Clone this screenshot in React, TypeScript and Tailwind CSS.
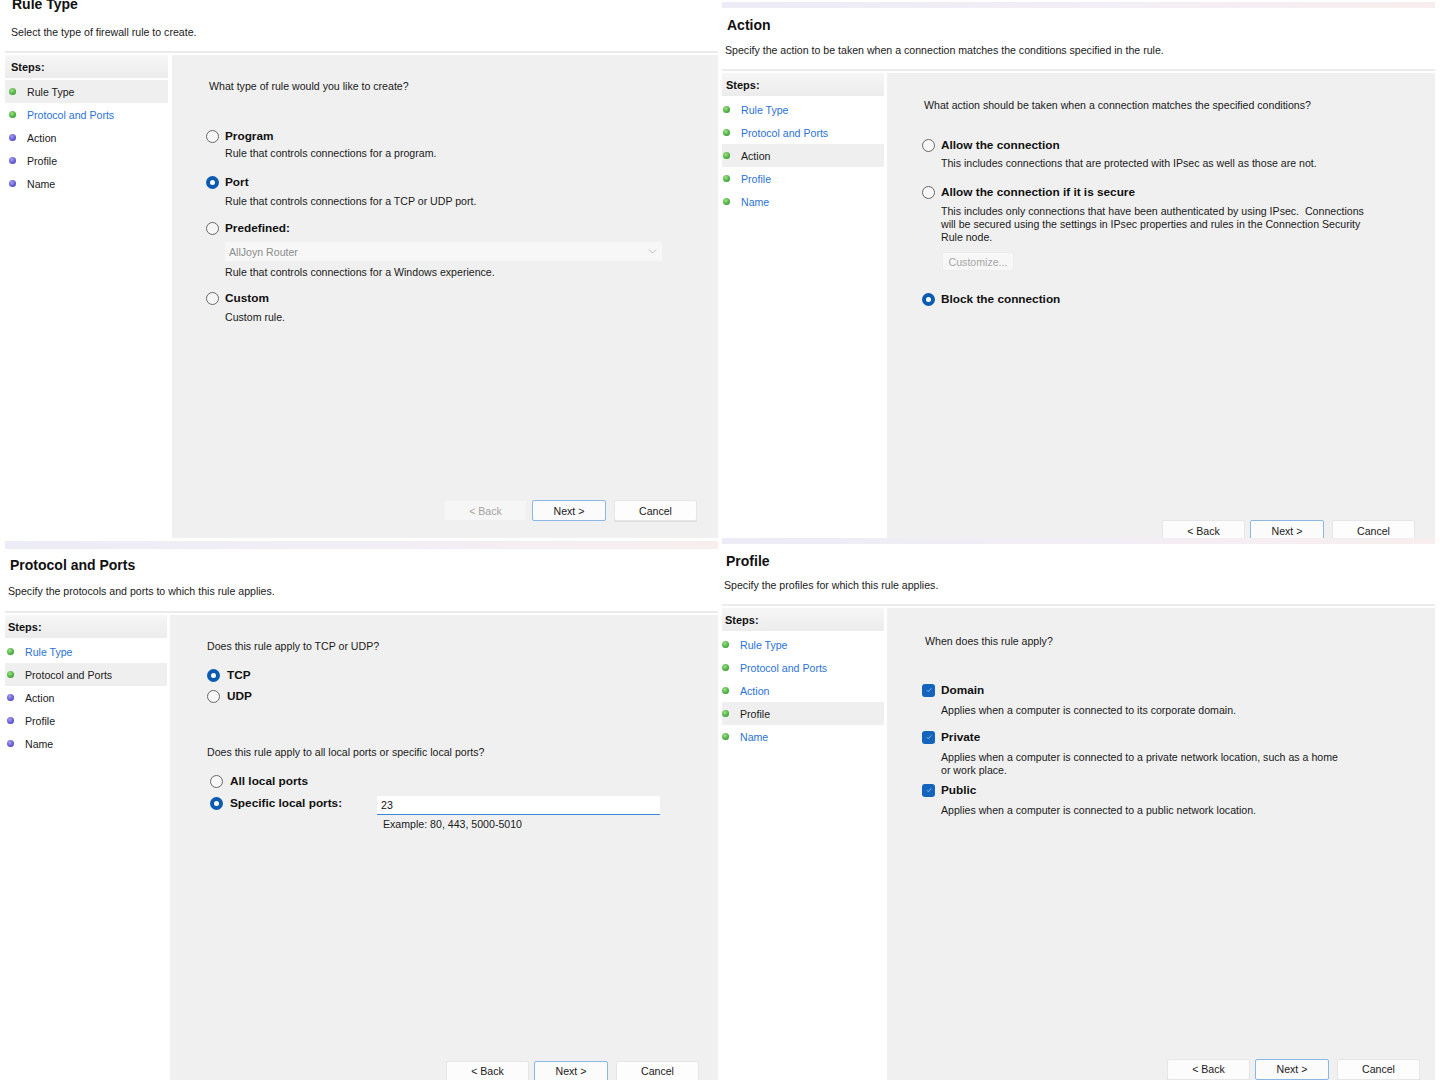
import type { ReactNode } from 'react'
import clsx from 'clsx'
import { ChevronDown } from 'lucide-react'

const STEPS = ['Rule Type', 'Protocol and Ports', 'Action', 'Profile', 'Name']

function Dot({ green }: { green: boolean }) {
  return (
    <span
      className={clsx(
        'h-[7px] w-[7px] shrink-0 rounded-full',
        green
          ? 'bg-[radial-gradient(circle_at_40%_35%,#9fe382,#2f9a2c_80%)]'
          : 'bg-[radial-gradient(circle_at_40%_35%,#a59ff0,#4c40c6_80%)]'
      )}
    />
  )
}

function Radio({ checked }: { checked?: boolean }) {
  if (checked) {
    return (
      <span className="flex h-[13px] w-[13px] shrink-0 items-center justify-center rounded-full bg-[#0b5cb0]">
        <span className="h-[5px] w-[5px] rounded-full bg-white" />
      </span>
    )
  }
  return <span className="h-[13px] w-[13px] shrink-0 rounded-full border border-[#676767] bg-[#f7f7f7]" />
}

function Check() {
  return (
    <span className="flex h-[13px] w-[13px] shrink-0 items-center justify-center rounded-[3px] bg-[#1463bd]">
      <svg viewBox="0 0 10 10" className="h-[8px] w-[8px]">
        <path d="M2.2 5.2l1.9 1.9 3.8-4.2" fill="none" stroke="#9fc6f0" strokeWidth="1.1" />
      </svg>
    </span>
  )
}

function Option({
  checked,
  label,
  className,
}: {
  checked?: boolean
  label: string
  className?: string
}) {
  return (
    <div className={clsx('flex h-[16px] items-center text-[11.8px] font-bold text-[#111]', className)}>
      <Radio checked={checked} />
      <span>{label}</span>
    </div>
  )
}

function Sidebar({
  active,
  allDone,
  className,
  headCls,
  rowCls,
}: {
  active: number
  allDone: boolean
  className?: string
  headCls?: string
  rowCls?: string
}) {
  return (
    <div className={clsx('shrink-0 bg-white', className)}>
      <div
        className={clsx(
          'flex h-[23px] items-center bg-gradient-to-b from-[#f6f6f6] to-[#ececec] text-[11px] font-bold text-[#111]',
          headCls
        )}
      >
        Steps:
      </div>
      <div className="mt-[2px]">
        {STEPS.map((s, i) => {
          const green = allDone || i < 2
          const link = green && i !== active
          return (
            <div
              key={s}
              className={clsx(
                'flex h-[23px] items-center gap-[11px]',
                i === active && 'bg-[#efefef]',
                rowCls
              )}
            >
              <Dot green={green} />
              <span className={link ? 'text-[#2a72d8]' : 'text-[#1a1a1a]'}>{s}</span>
            </div>
          )
        })}
      </div>
    </div>
  )
}

function Buttons({
  backDisabled,
  className,
}: {
  backDisabled?: boolean
  className?: string
}) {
  return (
    <div className={clsx('mt-auto flex shrink-0 justify-end', className)}>
      <button
        className={clsx(
          'h-[21px] w-[83px] rounded-[2px] border',
          backDisabled
            ? 'border-[#f1f1f1] bg-[#f6f6f6] text-[#a2a2a2]'
            : 'border-[#e6e6e6] bg-[#fcfcfc] text-[#1a1a1a] shadow-[0_1px_0_#dcdcdc]'
        )}
      >
        &lt; Back
      </button>
      <button className="ml-[5px] h-[21px] w-[74px] rounded-[2px] border border-[#8ab8e6] bg-[#fbfbfb] text-[#1a1a1a]">
        Next &gt;
      </button>
      <button className="ml-[8px] h-[21px] w-[83px] rounded-[2px] border border-[#e6e6e6] bg-[#fdfdfd] text-[#1a1a1a] shadow-[0_1px_0_#dcdcdc]">
        Cancel
      </button>
    </div>
  )
}

function Panel({
  title,
  subtitle,
  headCls,
  titleCls,
  subCls,
  bodyCls,
  side,
  children,
}: {
  title: string
  subtitle: string
  headCls: string
  titleCls: string
  subCls: string
  bodyCls: string
  side: ReactNode
  children: ReactNode
}) {
  return (
    <>
      <div className={clsx('flex shrink-0 flex-col bg-white', headCls)}>
        <h1 className={clsx('text-[14px] font-bold leading-[18px] text-[#111]', titleCls)}>{title}</h1>
        <p className={clsx('leading-[14px] text-[#1a1a1a]', subCls)}>{subtitle}</p>
      </div>
      <div className="h-[2px] shrink-0 bg-[#ebebeb]" />
      <div className={clsx('mt-[2px] flex shrink-0 overflow-hidden bg-white', bodyCls)}>
        {side}
        <div className="flex flex-1 flex-col bg-[#f0f0f0]">{children}</div>
      </div>
    </>
  )
}

function Strip({ className }: { className?: string }) {
  return (
    <div
      className={clsx(
        'shrink-0 bg-gradient-to-r from-[#ececf6] via-[#f2eef6] to-[#f8eeee]',
        className
      )}
    />
  )
}

export default function App() {
  return (
    <div className="flex h-[1080px] w-[1440px] overflow-hidden bg-white font-['Liberation_Sans',Arial,sans-serif] text-[10.6px] leading-[14px] text-[#1a1a1a]">
      {/* Left column */}
      <div className="ml-[5px] flex w-[713px] flex-col">
        <Panel
          title="Rule Type"
          subtitle="Select the type of firewall rule to create."
          headCls="h-[51px]"
          titleCls="-mt-[5px] pl-[7px]"
          subCls="mt-[11.5px] pl-[6px]"
          bodyCls="h-[483px] gap-[4px]"
          side={<Sidebar active={0} allDone={false} className="w-[163px]" headCls="pl-[6px]" rowCls="pl-[4px]" />}
        >
          <div className="pl-[37px] pt-[24px]">What type of rule would you like to create?</div>
          <div className="pl-[34px]">
            <Option label="Program" className="mt-[35px] gap-[6px]" />
            <div className="mt-[2px] pl-[19px]">Rule that controls connections for a program.</div>
            <Option checked label="Port" className="mt-[14px] gap-[6px]" />
            <div className="mt-[4px] pl-[19px]">Rule that controls connections for a TCP or UDP port.</div>
            <Option label="Predefined:" className="mt-[12px] gap-[6px]" />
            <div className="ml-[19px] mt-[6px] flex h-[19px] w-[437px] items-center justify-between bg-[#f7f7f7] pl-[4px] pr-[3px] text-[#8c8c8c]">
              <span>AllJoyn Router</span>
              <ChevronDown size={13} strokeWidth={1.2} className="text-[#a0a0a0]" />
            </div>
            <div className="mt-[4px] pl-[19px]">Rule that controls connections for a Windows experience.</div>
            <Option label="Custom" className="mt-[11px] gap-[6px]" />
            <div className="mt-[4px] pl-[19px]">Custom rule.</div>
          </div>
          <Buttons backDisabled className="mb-[17px] pr-[21px]" />
        </Panel>

        <Strip className="mt-[3px] h-[8px]" />

        <Panel
          title="Protocol and Ports"
          subtitle="Specify the protocols and ports to which this rule applies."
          headCls="h-[62px]"
          titleCls="mt-[7px] pl-[5px]"
          subCls="mt-[9.5px] pl-[3px]"
          bodyCls="h-[485px] gap-[3px]"
          side={<Sidebar active={1} allDone={false} className="w-[162px]" headCls="pl-[3px]" rowCls="pl-[2px]" />}
        >
          <div className="pl-[37px] pt-[24px]">Does this rule apply to TCP or UDP?</div>
          <Option checked label="TCP" className="mt-[14px] gap-[7px] pl-[37px]" />
          <Option label="UDP" className="mt-[5px] gap-[7px] pl-[37px]" />
          <div className="mt-[41px] pl-[37px]">Does this rule apply to all local ports or specific local ports?</div>
          <Option label="All local ports" className="mt-[14px] gap-[7px] pl-[40px]" />
          <div className="mt-[6px] flex items-start pl-[40px]">
            <div className="flex h-[16px] w-[167px] items-center gap-[7px] text-[11.8px] font-bold text-[#111]">
              <Radio checked />
              <span>Specific local ports:</span>
            </div>
            <div className="mt-[1px] flex h-[19px] w-[283px] items-center border-b border-[#3b87d6] bg-white pl-[4px] text-[#111]">
              23
            </div>
          </div>
          <div className="mt-[2px] pl-[213px]">Example: 80, 443, 5000-5010</div>
          <Buttons className="mb-[18.5px] pr-[19px]" />
        </Panel>
      </div>

      {/* Right column */}
      <div className="ml-[4px] flex w-[713px] flex-col">
        <Strip className="mt-[2px] h-[6px]" />
        <Panel
          title="Action"
          subtitle="Specify the action to be taken when a connection matches the conditions specified in the rule."
          headCls="h-[61px]"
          titleCls="mt-[8px] pl-[5px]"
          subCls="mt-[9px] pl-[3px]"
          bodyCls="h-[465px] gap-[3px]"
          side={<Sidebar active={2} allDone className="w-[162px]" headCls="pl-[4px]" rowCls="pl-[1px]" />}
        >
          <div className="pl-[37px] pt-[25px]">
            What action should be taken when a connection matches the specified conditions?
          </div>
          <div className="pl-[35px]">
            <Option label="Allow the connection" className="mt-[25px] gap-[6px]" />
            <div className="mt-[3px] pl-[19px]">
              This includes connections that are protected with IPsec as well as those are not.
            </div>
            <Option label="Allow the connection if it is secure" className="mt-[14px] gap-[6px]" />
            <div className="mt-[4.5px] pl-[19px] leading-[13px]">
              This includes only connections that have been authenticated by using IPsec.{'\u00a0 '}Connections
              <br />
              will be secured using the settings in IPsec properties and rules in the Connection Security
              <br />
              Rule node.
            </div>
            <div className="ml-[20px] mt-[8.5px] flex h-[19px] w-[72px] items-center justify-center rounded-[2px] border border-[#ededed] bg-[#f7f7f7] text-[#a6a6a6]">
              Customize...
            </div>
            <Option checked label="Block the connection" className="mt-[20px] gap-[6px]" />
          </div>
          <Buttons className="-mb-[3px] pr-[20px]" />
        </Panel>

        <Strip className="h-[6px]" />

        <Panel
          title="Profile"
          subtitle="Specify the profiles for which this rule applies."
          headCls="h-[60px]"
          titleCls="mt-[8px] pl-[4px]"
          subCls="mt-[8px] pl-[2px]"
          bodyCls="h-[492px] gap-[3px]"
          side={<Sidebar active={3} allDone className="w-[162px]" headCls="pl-[3px]" rowCls="pl-0" />}
        >
          <div className="pl-[38px] pt-[26px]">When does this rule apply?</div>
          <div className="pl-[35px]">
            <div className="mt-[34px] flex h-[16px] items-center gap-[6px] text-[11.8px] font-bold text-[#111]">
              <Check />
              <span>Domain</span>
            </div>
            <div className="mt-[5px] pl-[19px]">Applies when a computer is connected to its corporate domain.</div>
            <div className="mt-[12px] flex h-[16px] items-center gap-[6px] text-[11.8px] font-bold text-[#111]">
              <Check />
              <span>Private</span>
            </div>
            <div className="mt-[5.5px] pl-[19px] leading-[13px]">
              Applies when a computer is connected to a private network location, such as a home
              <br />
              or work place.
            </div>
            <div className="mt-[5.5px] flex h-[16px] items-center gap-[6px] text-[11.8px] font-bold text-[#111]">
              <Check />
              <span>Public</span>
            </div>
            <div className="mt-[5px] pl-[19px]">Applies when a computer is connected to a public network location.</div>
          </div>
          <Buttons className="mb-[20.5px] pr-[15px]" />
        </Panel>
      </div>
    </div>
  )
}
